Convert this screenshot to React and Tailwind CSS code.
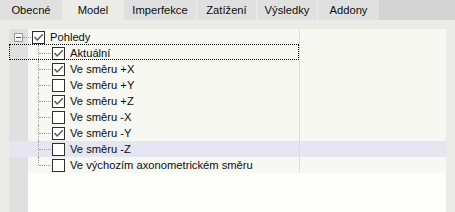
import React from "react";

const tabs = [
  { label: "Obecné", w: "w-[62px]" },
  { label: "Model", w: "w-[61px]", active: true },
  { label: "Imperfekce", w: "w-[73px]" },
  { label: "Zatížení", w: "w-[60px]" },
  { label: "Výsledky", w: "w-[61px]" },
  { label: "Addony", w: "w-[62px]" },
];

const items = [
  { label: "Aktuální", checked: true, focus: true },
  { label: "Ve směru +X", checked: true },
  { label: "Ve směru +Y", checked: false },
  { label: "Ve směru +Z", checked: true },
  { label: "Ve směru -X", checked: false },
  { label: "Ve směru -Y", checked: true },
  { label: "Ve směru -Z", checked: false, selected: true },
  { label: "Ve výchozím axonometrickém směru", checked: false, last: true },
];

function CheckBox({ checked }) {
  return (
    <div className="w-[13px] h-[13px] border border-[#2e2e2e] bg-[#fdfdfb] flex items-center justify-center shrink-0">
      {checked && (
        <svg width="11" height="11" viewBox="0 0 11 11">
          <polyline points="1.5,5 4.2,8 9.8,2.2" fill="none" stroke="#5a5a5a" strokeWidth="1.4" />
        </svg>
      )}
    </div>
  );
}

export default function App() {
  return (
    <div
      className="w-[455px] h-[212px] bg-[#ebebe8] overflow-hidden text-[11.2px] text-[#0d0d0d]"
      style={{ fontFamily: '"Liberation Sans", Arial, sans-serif' }}
    >
      {/* tab bar */}
      <div className="flex h-[20px] bg-[#d4d4d4]">
        {tabs.map((t, i) => (
          <div
            key={t.label}
            className={`${t.w} h-full flex items-center justify-center ${
              t.active ? "bg-[#ebebe8]" : "bg-[#e0e0e0]"
            } ${i > 0 ? "border-l border-[#ebebeb]" : ""}`}
          >
            {t.label}
          </div>
        ))}
      </div>

      {/* content */}
      <div className="mt-[9px] mx-[9px] h-[200px] flex flex-col bg-[#fdfdf9]">
        {/* root row */}
        <div className="flex h-[16px]">
          <div className="w-[291px] flex border-r border-[#dcdcd8]">
            <div className="w-[19px] bg-[#e0e0e0] flex items-center pl-[5px]">
              <div className="w-[9px] h-[9px] border border-[#9a9a9a] bg-[#f4f4f4] flex items-center justify-center">
                <div className="w-[5px] h-px bg-[#555555]" />
              </div>
            </div>
            <div className="flex-1 flex items-center bg-[#f8f8f2] relative">
              <div className="absolute left-[-5px] w-[8px] top-1/2 border-t border-dotted border-[#a0a0a0]" />
              <div className="absolute left-[10px] top-[15px] bottom-0 border-l border-dotted border-[#a0a0a0]" />
              <div className="ml-[4px]">
                <CheckBox checked />
              </div>
              <span className="ml-[5px]">Pohledy</span>
            </div>
          </div>
          <div className="flex-1 bg-[#f8f8f2]" />
        </div>

        {items.map((it) => (
          <div key={it.label} className={`relative flex h-[16px] ${it.selected ? "bg-[#e6e6f2]" : ""}`}>
            <div className="w-[291px] flex border-r border-[#dcdcd8]">
              <div className={`w-[19px] ${it.selected ? "" : "bg-[#e0e0e0]"}`} />
              <div className={`flex-1 flex items-center relative ${it.selected ? "" : "bg-[#f8f8f2]"}`}>
                <div
                  className={`absolute left-[10px] top-0 ${
                    it.last ? "h-[8px]" : "bottom-0"
                  } border-l border-dotted border-[#a0a0a0]`}
                />
                <div className="absolute left-[11px] w-[12px] top-1/2 border-t border-dotted border-[#a0a0a0]" />
                <div className="ml-[24px]">
                  <CheckBox checked={it.checked} />
                </div>
                <span className="ml-[5px] whitespace-nowrap">{it.label}</span>
              </div>
            </div>
            <div className={`flex-1 ${it.selected ? "" : "bg-[#f8f8f2]"}`} />
            {it.focus && (
              <div className="absolute left-0 top-[-1px] w-[290px] h-[16px] border border-dotted border-black z-10 pointer-events-none" />
            )}
          </div>
        ))}

        {/* filler */}
        <div className="flex flex-1">
          <div className="w-[19px] bg-[#e0e0e0]" />
          <div className="flex-1 bg-[#fdfdf9]" />
        </div>
      </div>
    </div>
  );
}
